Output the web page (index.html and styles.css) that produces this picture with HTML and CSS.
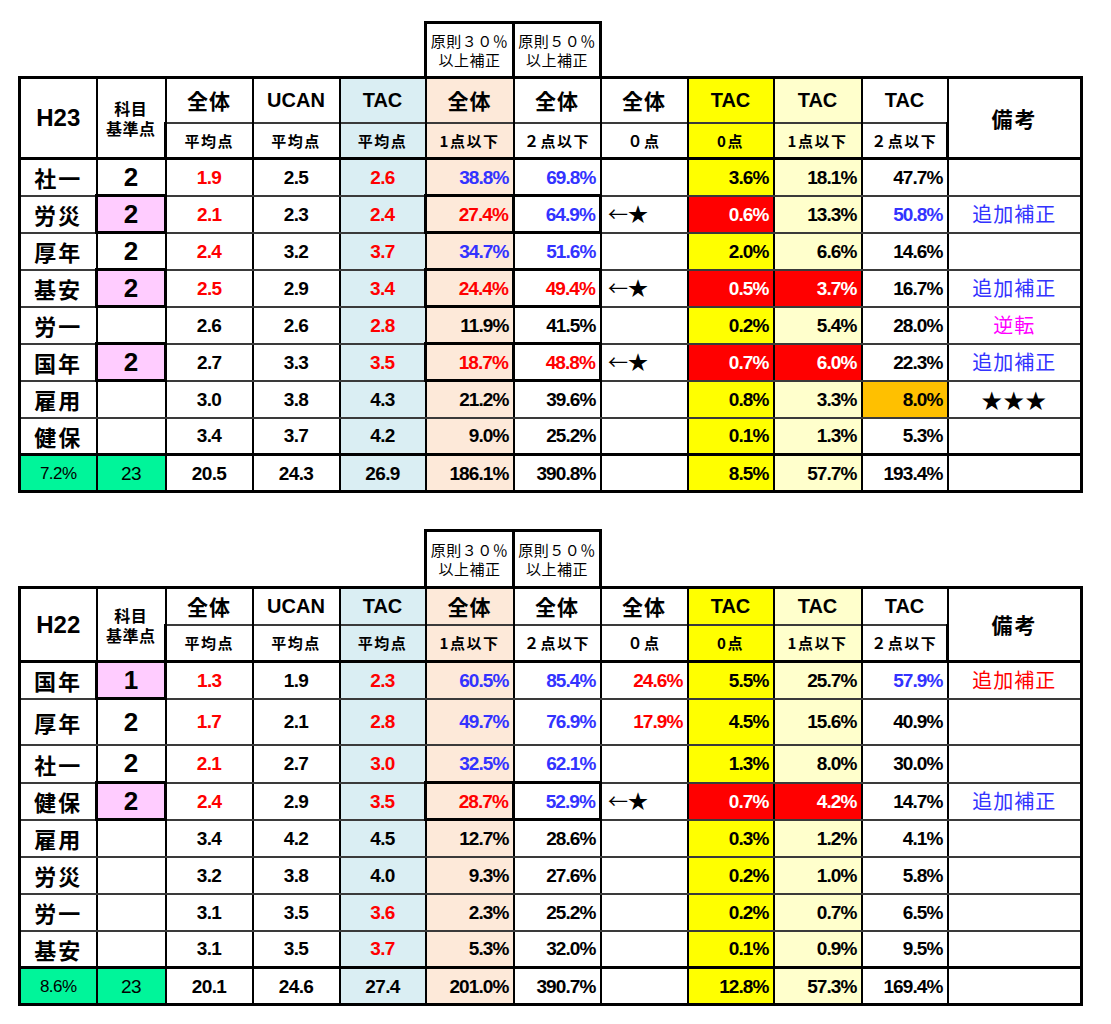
FILE: index.html
```html
<!DOCTYPE html>
<html lang="ja">
<head>
<meta charset="utf-8">
<title>H23 / H22</title>
<link rel="stylesheet" href="styles.css">
</head>
<body>
<div class="page">

<table class="sheet t23">
<colgroup>
<col class="c1"><col class="c2"><col class="c3"><col class="c4"><col class="c5"><col class="c6"><col class="c7"><col class="c8"><col class="c9"><col class="c10"><col class="c11"><col class="c12">
</colgroup>
<tr class="r0">
<td class="blank"></td><td class="blank"></td><td class="blank"></td><td class="blank"></td><td class="blank"></td>
<td class="top">原則３０％<br>以上補正</td><td class="top">原則５０％<br>以上補正</td>
<td class="blank"></td><td class="blank"></td><td class="blank"></td><td class="blank"></td><td class="blank"></td>
</tr>
<tr class="hA">
<td rowspan="2" class="year">H23</td>
<td rowspan="2" class="kijun">科目<br>基準点</td>
<td class="hj">全体</td><td class="he">UCAN</td><td class="he lb">TAC</td><td class="hj pe">全体</td><td class="hj">全体</td><td class="hj">全体</td><td class="he ye">TAC</td><td class="he ly">TAC</td><td class="he">TAC</td>
<td rowspan="2" class="bikou">備考</td>
</tr>
<tr class="hB">
<td class="hs">平均点</td><td class="hs">平均点</td><td class="hs lb">平均点</td><td class="hs pe">1点以下</td><td class="hs">２点以下</td><td class="hs">０点</td><td class="hs ye">0点</td><td class="hs ly">1点以下</td><td class="hs">２点以下</td>
</tr>
<tr class="row first">
<td class="lbl">社一</td><td class="std">2</td><td class="num r">1.9</td><td class="num">2.5</td><td class="num lb r">2.6</td><td class="pct pe b">38.8%</td><td class="pct b">69.8%</td><td class="mark"></td><td class="pct ye">3.6%</td><td class="pct ly">18.1%</td><td class="pct">47.7%</td><td class="note"></td>
</tr>
<tr class="row">
<td class="lbl">労災</td><td class="std pk box">2</td><td class="num r">2.1</td><td class="num">2.3</td><td class="num lb r">2.4</td><td class="pct pe r box">27.4%</td><td class="pct b box">64.9%</td><td class="mark">←★</td><td class="pct rd w">0.6%</td><td class="pct ly">13.3%</td><td class="pct b">50.8%</td><td class="note b">追加補正</td>
</tr>
<tr class="row">
<td class="lbl">厚年</td><td class="std">2</td><td class="num r">2.4</td><td class="num">3.2</td><td class="num lb r">3.7</td><td class="pct pe b">34.7%</td><td class="pct b">51.6%</td><td class="mark"></td><td class="pct ye">2.0%</td><td class="pct ly">6.6%</td><td class="pct">14.6%</td><td class="note"></td>
</tr>
<tr class="row">
<td class="lbl">基安</td><td class="std pk box">2</td><td class="num r">2.5</td><td class="num">2.9</td><td class="num lb r">3.4</td><td class="pct pe r box">24.4%</td><td class="pct r box">49.4%</td><td class="mark">←★</td><td class="pct rd w">0.5%</td><td class="pct rd w">3.7%</td><td class="pct">16.7%</td><td class="note b">追加補正</td>
</tr>
<tr class="row">
<td class="lbl">労一</td><td class="std"></td><td class="num">2.6</td><td class="num">2.6</td><td class="num lb r">2.8</td><td class="pct pe">11.9%</td><td class="pct">41.5%</td><td class="mark"></td><td class="pct ye">0.2%</td><td class="pct ly">5.4%</td><td class="pct">28.0%</td><td class="note m">逆転</td>
</tr>
<tr class="row">
<td class="lbl">国年</td><td class="std pk box">2</td><td class="num">2.7</td><td class="num">3.3</td><td class="num lb r">3.5</td><td class="pct pe r box">18.7%</td><td class="pct r box">48.8%</td><td class="mark">←★</td><td class="pct rd w">0.7%</td><td class="pct rd w">6.0%</td><td class="pct">22.3%</td><td class="note b">追加補正</td>
</tr>
<tr class="row">
<td class="lbl">雇用</td><td class="std"></td><td class="num">3.0</td><td class="num">3.8</td><td class="num lb">4.3</td><td class="pct pe">21.2%</td><td class="pct">39.6%</td><td class="mark"></td><td class="pct ye">0.8%</td><td class="pct ly">3.3%</td><td class="pct or">8.0%</td><td class="note stars">★★★</td>
</tr>
<tr class="row">
<td class="lbl">健保</td><td class="std"></td><td class="num">3.4</td><td class="num">3.7</td><td class="num lb">4.2</td><td class="pct pe">9.0%</td><td class="pct">25.2%</td><td class="mark"></td><td class="pct ye">0.1%</td><td class="pct ly">1.3%</td><td class="pct">5.3%</td><td class="note"></td>
</tr>
<tr class="row total">
<td class="tot gr small">7.2%</td><td class="tot gr">23</td><td class="num">20.5</td><td class="num">24.3</td><td class="num lb">26.9</td><td class="pct pe">186.1%</td><td class="pct">390.8%</td><td class="mark"></td><td class="pct ye">8.5%</td><td class="pct ly">57.7%</td><td class="pct">193.4%</td><td class="note"></td>
</tr>
</table>

<table class="sheet t22">
<colgroup>
<col class="c1"><col class="c2"><col class="c3"><col class="c4"><col class="c5"><col class="c6"><col class="c7"><col class="c8"><col class="c9"><col class="c10"><col class="c11"><col class="c12">
</colgroup>
<tr class="r0 r0b">
<td class="blank"></td><td class="blank"></td><td class="blank"></td><td class="blank"></td><td class="blank"></td>
<td class="top">原則３０％<br>以上補正</td><td class="top">原則５０％<br>以上補正</td>
<td class="blank"></td><td class="blank"></td><td class="blank"></td><td class="blank"></td><td class="blank"></td>
</tr>
<tr class="hA hAb">
<td rowspan="2" class="year">H22</td>
<td rowspan="2" class="kijun">科目<br>基準点</td>
<td class="hj">全体</td><td class="he">UCAN</td><td class="he lb">TAC</td><td class="hj pe">全体</td><td class="hj">全体</td><td class="hj">全体</td><td class="he ye">TAC</td><td class="he ly">TAC</td><td class="he">TAC</td>
<td rowspan="2" class="bikou">備考</td>
</tr>
<tr class="hB hBb">
<td class="hs">平均点</td><td class="hs">平均点</td><td class="hs lb">平均点</td><td class="hs pe">1点以下</td><td class="hs">２点以下</td><td class="hs">０点</td><td class="hs ye">0点</td><td class="hs ly">1点以下</td><td class="hs">２点以下</td>
</tr>
<tr class="row first">
<td class="lbl">国年</td><td class="std pk box">1</td><td class="num r">1.3</td><td class="num">1.9</td><td class="num lb r">2.3</td><td class="pct pe b">60.5%</td><td class="pct b">85.4%</td><td class="pct r">24.6%</td><td class="pct ye">5.5%</td><td class="pct ly">25.7%</td><td class="pct b">57.9%</td><td class="note r">追加補正</td>
</tr>
<tr class="row tall">
<td class="lbl">厚年</td><td class="std">2</td><td class="num r">1.7</td><td class="num">2.1</td><td class="num lb r">2.8</td><td class="pct pe b">49.7%</td><td class="pct b">76.9%</td><td class="pct r">17.9%</td><td class="pct ye">4.5%</td><td class="pct ly">15.6%</td><td class="pct">40.9%</td><td class="note"></td>
</tr>
<tr class="row mid">
<td class="lbl">社一</td><td class="std">2</td><td class="num r">2.1</td><td class="num">2.7</td><td class="num lb r">3.0</td><td class="pct pe b">32.5%</td><td class="pct b">62.1%</td><td class="mark"></td><td class="pct ye">1.3%</td><td class="pct ly">8.0%</td><td class="pct">30.0%</td><td class="note"></td>
</tr>
<tr class="row">
<td class="lbl">健保</td><td class="std pk box">2</td><td class="num r">2.4</td><td class="num">2.9</td><td class="num lb r">3.5</td><td class="pct pe r box">28.7%</td><td class="pct b box">52.9%</td><td class="mark">←★</td><td class="pct rd w">0.7%</td><td class="pct rd w">4.2%</td><td class="pct">14.7%</td><td class="note b">追加補正</td>
</tr>
<tr class="row">
<td class="lbl">雇用</td><td class="std"></td><td class="num">3.4</td><td class="num">4.2</td><td class="num lb">4.5</td><td class="pct pe">12.7%</td><td class="pct">28.6%</td><td class="mark"></td><td class="pct ye">0.3%</td><td class="pct ly">1.2%</td><td class="pct">4.1%</td><td class="note"></td>
</tr>
<tr class="row">
<td class="lbl">労災</td><td class="std"></td><td class="num">3.2</td><td class="num">3.8</td><td class="num lb">4.0</td><td class="pct pe">9.3%</td><td class="pct">27.6%</td><td class="mark"></td><td class="pct ye">0.2%</td><td class="pct ly">1.0%</td><td class="pct">5.8%</td><td class="note"></td>
</tr>
<tr class="row">
<td class="lbl">労一</td><td class="std"></td><td class="num">3.1</td><td class="num">3.5</td><td class="num lb r">3.6</td><td class="pct pe">2.3%</td><td class="pct">25.2%</td><td class="mark"></td><td class="pct ye">0.2%</td><td class="pct ly">0.7%</td><td class="pct">6.5%</td><td class="note"></td>
</tr>
<tr class="row">
<td class="lbl">基安</td><td class="std"></td><td class="num">3.1</td><td class="num">3.5</td><td class="num lb r">3.7</td><td class="pct pe">5.3%</td><td class="pct">32.0%</td><td class="mark"></td><td class="pct ye">0.1%</td><td class="pct ly">0.9%</td><td class="pct">9.5%</td><td class="note"></td>
</tr>
<tr class="row total">
<td class="tot gr small">8.6%</td><td class="tot gr">23</td><td class="num">20.1</td><td class="num">24.6</td><td class="num lb">27.4</td><td class="pct pe">201.0%</td><td class="pct">390.7%</td><td class="mark"></td><td class="pct ye">12.8%</td><td class="pct ly">57.3%</td><td class="pct">169.4%</td><td class="note"></td>
</tr>
</table>

</div>
</body>
</html>
```

FILE: styles.css
```css
html, body {
  margin: 0;
  padding: 0;
  background: #ffffff;
}

body {
  font-family: "Liberation Sans", "Noto Sans CJK JP", sans-serif;
  color: #000;
}

.page {
  padding: 21px 0 0 18px;
}

.sheet {
  border-collapse: collapse;
  table-layout: fixed;
  width: 1064px;
}

.t22 {
  margin-top: 36px;
}

.c1 { width: 77px; }
.c2 { width: 69px; }
.c3 { width: 87px; }
.c4 { width: 87px; }
.c5 { width: 86px; }
.c6 { width: 88px; }
.c7 { width: 87px; }
.c8 { width: 87px; }
.c9 { width: 86px; }
.c10 { width: 88px; }
.c11 { width: 86px; }
.c12 { width: 134px; }

.sheet td {
  box-sizing: border-box;
  border-top: 2px solid #3a3a3a;
  border-bottom: 2px solid #3a3a3a;
  border-left: 2px solid #000;
  border-right: 2px solid #000;
  padding: 0;
  text-align: center;
  vertical-align: middle;
  white-space: nowrap;
  overflow: hidden;
  line-height: 1;
}

.sheet td:first-child { border-left-width: 3px; }
.sheet td:last-child { border-right-width: 3px; }

/* row heights */
.sheet .r0 td { height: 55px; }
.sheet .r0b td { height: 57px; }
.sheet .hA td { height: 45px; border-top: 3px solid #000; }
.sheet .hAb td { height: 37px; }
.sheet .hB td { height: 36px; }
.sheet .hBb td { height: 37px; }
.sheet .row td { height: 37px; }
.sheet .row.tall td { height: 46px; }
.sheet .row.mid td { height: 38px; }
.sheet .row.first td { border-top: 3px solid #000; }
.sheet .row.total td { border-top: 3px solid #000; border-bottom: 3px solid #000; }

.sheet .r0 td.blank {
  border: none;
}

.sheet td.top {
  border: 3px solid #000;
  font-family: "Noto Sans CJK JP", sans-serif;
  font-size: 15px;
  line-height: 19px;
  letter-spacing: 0.5px;
  font-weight: normal;
}

/* header texts */
.sheet .year {
  font-size: 24px;
  font-weight: bold;
}

.sheet .kijun {
  font-family: "Noto Sans CJK JP", sans-serif;
  font-size: 16px;
  line-height: 20px;
  font-weight: bold;
  letter-spacing: 0.5px;
}

.sheet .hj {
  font-family: "Noto Sans CJK JP", sans-serif;
  font-size: 21px;
  font-weight: bold;
  letter-spacing: 1px;
}

.sheet .he {
  font-size: 20px;
  font-weight: bold;
}

.sheet .hs {
  font-family: "Noto Sans CJK JP", sans-serif;
  font-size: 15px;
  font-weight: bold;
  letter-spacing: 1.5px;
}

.sheet .hA td.hj,
.sheet .hA td.he {
  border-bottom: 1px solid #3a3a3a;
}

.sheet .bikou {
  font-family: "Noto Sans CJK JP", sans-serif;
  font-size: 21px;
  font-weight: bold;
  letter-spacing: 2px;
}

/* body texts */
.sheet .lbl {
  font-family: "Noto Sans CJK JP", sans-serif;
  font-size: 22px;
  font-weight: bold;
  letter-spacing: 2px;
}

.sheet .std {
  font-size: 26px;
  font-weight: bold;
}

.sheet .num {
  font-size: 19px;
  font-weight: bold;
  letter-spacing: -0.6px;
}

.sheet .pct {
  font-size: 19px;
  font-weight: bold;
  letter-spacing: -0.9px;
  text-align: right;
  padding-right: 4px;
}

.sheet .tot {
  font-size: 19px;
  letter-spacing: -0.5px;
}

.sheet .tot.small {
  font-size: 17px;
}

.sheet .mark {
  font-family: "Noto Sans CJK JP", sans-serif;
  font-size: 20px;
  text-align: left;
  padding-left: 6px;
}

.sheet .note {
  font-family: "Noto Sans CJK JP", sans-serif;
  font-size: 20px;
  letter-spacing: 1px;
}

.sheet .stars {
  font-size: 21px;
  letter-spacing: 1px;
}

.sheet td.box {
  border: 3px solid #000;
}

/* colours */
.lb { background: #daeef3; }
.pe { background: #fde9d9; }
.ye { background: #ffff00; }
.ly { background: #ffffcc; }
.rd { background: #ff0000; }
.or { background: #ffc000; }
.pk { background: #ffccff; }
.gr { background: #00f59a; }

.r { color: #ff0000; }
.b { color: #3333ff; }
.m { color: #ff00ff; }
.w { color: #ffffff; }
```
